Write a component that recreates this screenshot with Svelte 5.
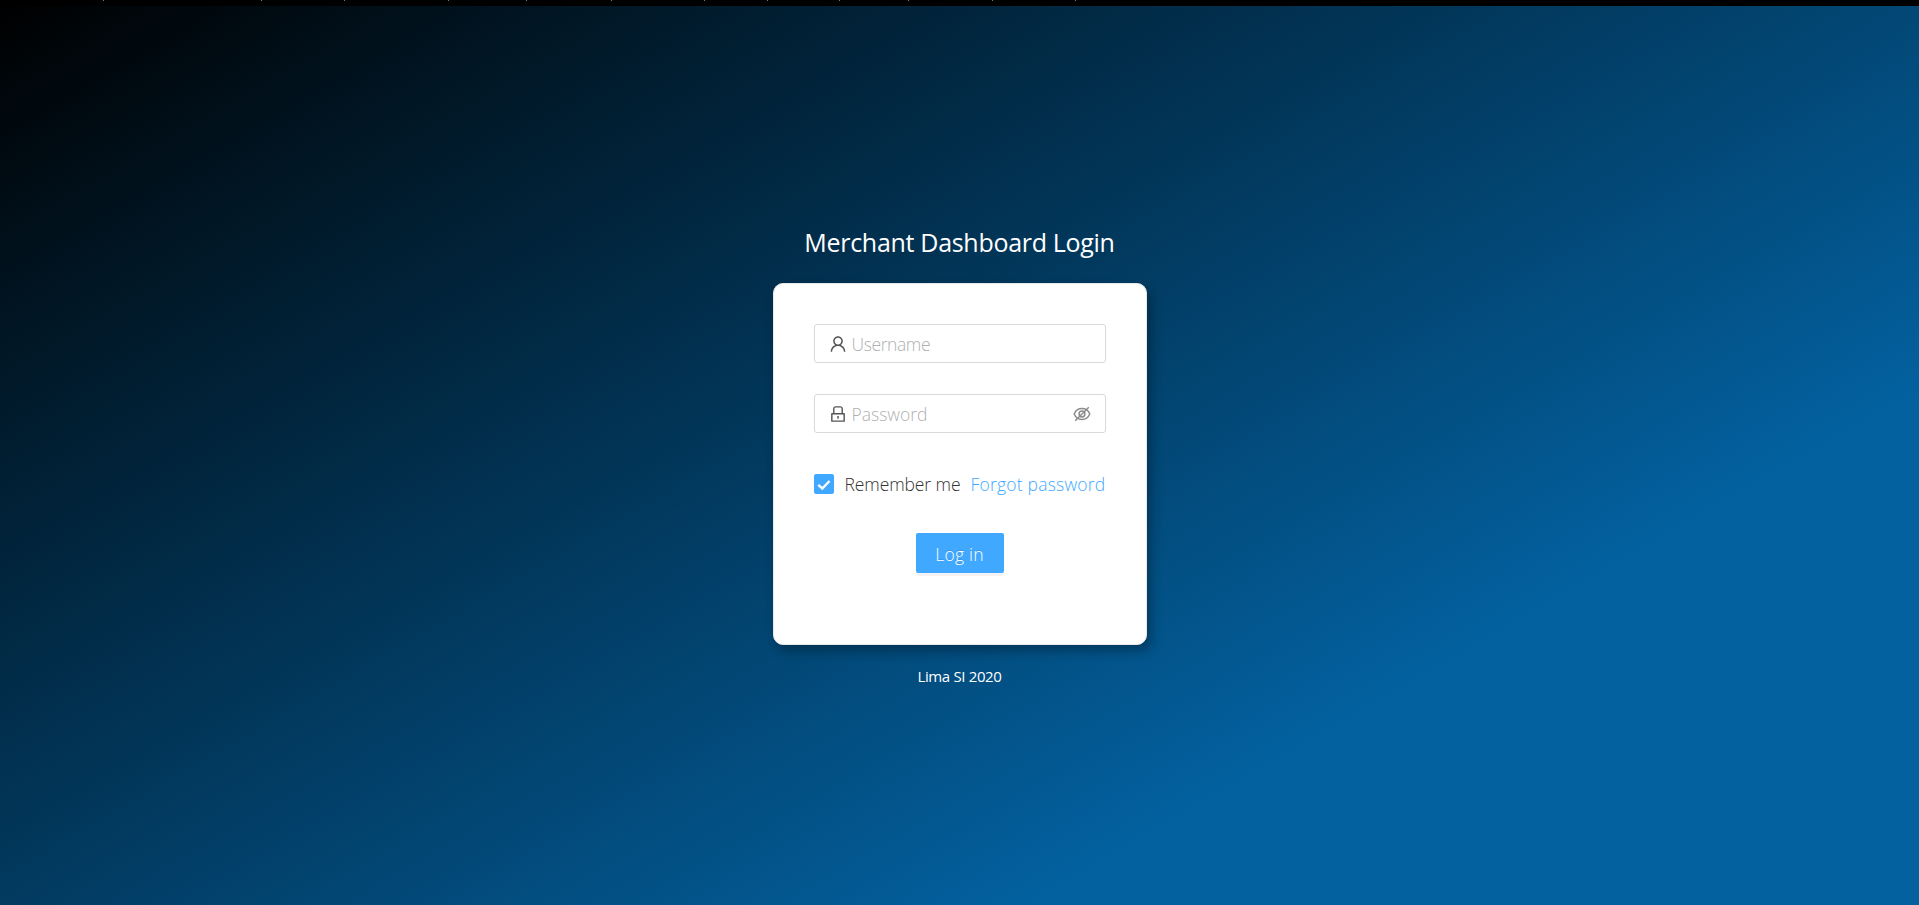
<script>
  let username = $state('');
  let password = $state('');
  let remember = $state(true);
  const marks = [103, 261, 344, 448, 526, 611, 704, 767, 839, 908, 992, 1075];
</script>

<main class="page">
  <div class="topbar">
    {#each marks as x}<i class="mark" style="left: {x}px"></i>{/each}
  </div>
  <h1>Merchant Dashboard Login</h1>
  <form class="card" onsubmit={(e) => e.preventDefault()}>
    <label class="field">
      <svg class="icon" viewBox="0 0 1024 1024" aria-hidden="true">
        <path d="M858.5 763.6a374 374 0 00-80.6-119.5 375.63 375.63 0 00-119.5-80.6c-.4-.2-.8-.3-1.2-.5C719.5 518 760 444.7 760 362c0-137-111-248-248-248S264 225 264 362c0 82.7 40.5 156 102.8 201.1-.4.2-.8.3-1.2.5-44.8 18.9-85 46-119.5 80.6a375.63 375.63 0 00-80.6 119.5A371.7 371.7 0 00136 901.8a8 8 0 008 8.2h60c4.4 0 7.9-3.5 8-7.8 2-77.2 33-149.5 87.8-204.3 56.7-56.7 132-87.9 212.2-87.9s155.5 31.2 212.2 87.9C779 752.7 810 825 812 902.2c.1 4.4 3.6 7.8 8 7.8h60a8 8 0 008-8.2c-1-47.8-10.9-94.3-29.5-138.2zM512 534c-45.9 0-89.1-17.9-121.6-50.4S340 407.9 340 362c0-45.9 17.9-89.1 50.4-121.6S466.1 190 512 190s89.1 17.9 121.6 50.4S684 316.1 684 362c0 45.9-17.9 89.1-50.4 121.6S557.9 534 512 534z" />
      </svg>
      <input class="user" type="text" placeholder="Username" bind:value={username} />
    </label>
    <label class="field">
      <svg class="icon" viewBox="0 0 1024 1024" aria-hidden="true">
        <path d="M832 464h-68V240c0-70.7-57.3-128-128-128H388c-70.7 0-128 57.3-128 128v224h-68c-17.7 0-32 14.3-32 32v384c0 17.7 14.3 32 32 32h640c17.7 0 32-14.3 32-32V496c0-17.7-14.3-32-32-32zM332 240c0-30.9 25.1-56 56-56h248c30.9 0 56 25.1 56 56v224H332V240zm460 600H232V536h560v304zM484 701v53c0 4.4 3.6 8 8 8h40c4.4 0 8-3.6 8-8v-53a48.01 48.01 0 10-56 0z" />
      </svg>
      <input class="pass" type="password" placeholder="Password" bind:value={password} />
      <svg class="eye" viewBox="0 0 18 18" aria-hidden="true">
        <path d="M1.2 9C2.8 5.2 5.5 3.6 9 3.6S15.200 5.200 16.800 9C15.200 12.800 12.500 14.400 9 14.400S2.800 12.800 1.200 9Z" />
        <circle cx="9" cy="9" r="2.900" />
        <path d="M2.200 15.800 15.800 2.200" />
      </svg>
    </label>
    <div class="options">
      <label class="remember">
        <input type="checkbox" bind:checked={remember} />
        <span class="box">
          {#if remember}<svg viewBox="0 0 20 20"><path d="M4.300 10.900 8.300 14.500 15.500 7" /></svg>{/if}
        </span>
        <span class="rtext">Remember me</span>
      </label>
      <a href="#forgot">Forgot password</a>
    </div>
    <button type="submit">Log in</button>
  </form>
  <footer>Lima SI 2020</footer>
</main>

<style>
  :global(body) { margin: 0; overflow: hidden; }
  .page {
    box-sizing: border-box;
    height: 905px;
    display: flex;
    flex-direction: column;
    align-items: center;
    background: linear-gradient(150deg, #000 0%, #0361a0 75%);
    font-family: "Open Sans", "Noto Sans", sans-serif;
    font-size: 17.5px;
    font-weight: 300;
  }
  .topbar { position: relative; align-self: stretch; height: 6px; background: #000; }
  .mark { position: absolute; top: 0; width: 1px; height: 1px; background: #777; }
  h1 {
    margin: 218px 0 0;
    height: 36px;
    line-height: 36px;
    font-size: 25px;
    font-weight: 400;
    letter-spacing: -0.3px;
    color: #fff;
    white-space: nowrap;
  }
  .card {
    box-sizing: border-box;
    width: 374px;
    height: 362px;
    margin-top: 23px;
    padding: 40px;
    border: 1px solid #e8e8e8;
    border-radius: 10px;
    background: #fff;
    box-shadow: 4px 6px 12px rgba(0, 0, 0, 0.3);
    display: flex;
    flex-direction: column;
  }
  .field {
    box-sizing: border-box;
    height: 39px;
    margin-bottom: 31px;
    padding: 0 14px 0 13px;
    border: 1px solid #d9d9d9;
    border-radius: 3px;
    display: flex;
    align-items: center;
  }
  .icon { width: 20px; height: 20px; flex: none; fill: #555; }
  .eye { width: 18px; height: 18px; flex: none; fill: none; stroke: #8c8c8c; stroke-width: 1.5; }
  .field input {
    flex: 1;
    min-width: 0;
    height: 37px;
    box-sizing: border-box;
    padding: 1px 0 0 4px;
    border: 0;
    outline: 0;
    background: none;
    font: inherit;
    color: #444;
  }
  .field .user { letter-spacing: -0.4px; }
  .field input::placeholder { color: #b0b0b0; opacity: 1; }
  .options {
    height: 28px;
    margin-top: 6px;
    display: flex;
    justify-content: space-between;
    align-items: center;
    line-height: 28px;
    white-space: nowrap;
  }
  .remember { display: flex; align-items: center; color: #333; }
  .remember input { position: absolute; opacity: 0; pointer-events: none; }
  .rtext { letter-spacing: -0.1px; }
  .box { width: 20px; height: 20px; border-radius: 2px; background: #40a9ff; margin-right: 11px; }
  .box svg { display: block; fill: none; stroke: #fff; stroke-width: 2.400; }
  a { color: #40a9ff; text-decoration: none; letter-spacing: 0.22px; }
  button {
    align-self: center;
    width: 88px;
    height: 40px;
    margin-top: 35px;
    padding: 1px 0 0;
    border: 0;
    border-radius: 2px;
    background: #40a9ff;
    box-shadow: 0 3px 0 rgba(0, 0, 0, 0.045);
    color: #fff;
    font: inherit;
    letter-spacing: 0.2px;
    text-shadow: 0 -1px 0 rgba(0, 0, 0, 0.12);
  }
  footer { margin-top: 20px; line-height: 22px; font-size: 15px; font-weight: 400; letter-spacing: -0.35px; color: #fff; }
</style>
